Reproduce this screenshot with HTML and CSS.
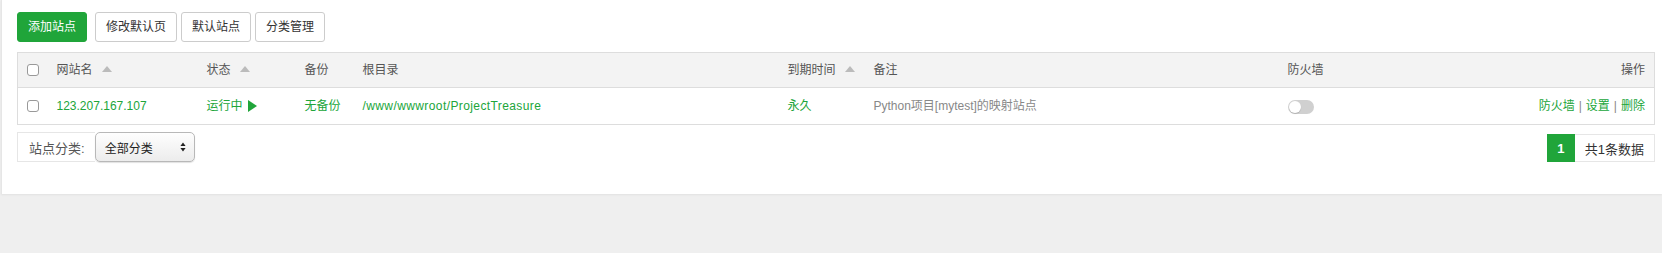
FILE: index.html
```html
<!DOCTYPE html>
<html lang="zh-CN">
<head>
<meta charset="utf-8">
<title>网站</title>
<link rel="stylesheet" href="styles.css">
</head>
<body>
<div class="panel">
  <div class="toolbar">
    <button class="btn btn-primary">添加站点</button>
    <button class="btn">修改默认页</button>
    <button class="btn">默认站点</button>
    <button class="btn">分类管理</button>
  </div>
  <table class="grid">
    <colgroup>
      <col class="c-check">
      <col class="c-name">
      <col class="c-status">
      <col class="c-backup">
      <col class="c-path">
      <col class="c-exp">
      <col class="c-note">
      <col class="c-fw">
      <col class="c-op">
    </colgroup>
    <thead>
      <tr>
        <th><span class="cb"></span></th>
        <th>网站名<span class="sort"></span></th>
        <th>状态<span class="sort"></span></th>
        <th>备份</th>
        <th>根目录</th>
        <th>到期时间<span class="sort"></span></th>
        <th>备注</th>
        <th>防火墙</th>
        <th class="right">操作</th>
      </tr>
    </thead>
    <tbody>
      <tr>
        <td><span class="cb"></span></td>
        <td class="green">123.207.167.107</td>
        <td class="green">运行中 <span class="play"></span></td>
        <td class="green">无备份</td>
        <td class="green path">/www/wwwroot/ProjectTreasure</td>
        <td class="green">永久</td>
        <td class="muted">Python项目[mytest]的映射站点</td>
        <td><span class="toggle"><span class="knob"></span></span></td>
        <td class="right ops"><span class="link">防火墙</span><span class="sep">|</span><span class="link">设置</span><span class="sep">|</span><span class="link">删除</span></td>
      </tr>
    </tbody>
  </table>
  <div class="footer">
    <div class="filter">
      <span class="filter-label">站点分类:</span>
      <div class="select">
        <span>全部分类</span>
        <svg class="updown" width="6" height="10" viewBox="0 0 6 10"><path d="M3 0.5 L5.6 4 L0.4 4 Z M3 9.5 L5.6 6 L0.4 6 Z" fill="#222"/></svg>
      </div>
    </div>
    <div class="pager">
      <span class="page current">1</span>
      <span class="page info">共1条数据</span>
    </div>
  </div>
</div>
</body>
</html>
```

FILE: styles.css
```css
* { box-sizing: border-box; }

html, body {
  margin: 0;
  padding: 0;
}

body {
  background: #efefef;
  font-family: "Liberation Sans", "Noto Sans CJK SC", sans-serif;
  font-size: 12px;
  color: #555;
  height: 253px;
}

.panel {
  background: #fff;
  height: 194px;
  margin-left: 1px;
  padding: 12px 8px 0 15px;
  box-shadow: 0 1px 2px rgba(0, 0, 0, 0.06);
  border-left: 1px solid #e6e6e6;
}

.toolbar {
  display: flex;
  gap: 4px;
  height: 30px;
}

.btn {
  font-family: inherit;
  font-size: 12px;
  height: 30px;
  padding: 0 10px;
  border: 1px solid #ccc;
  border-radius: 3px;
  background: #fff;
  color: #333;
  line-height: 28px;
  cursor: pointer;
}

.btn-primary {
  background: #20a53a;
  border-color: #20a53a;
  color: #fff;
  margin-right: 4px;
}

.grid {
  margin-top: 10px;
  width: 1638px;
  border-collapse: collapse;
  table-layout: fixed;
  border: 1px solid #ddd;
}

.c-check { width: 30px; }
.c-name { width: 150px; }
.c-status { width: 98px; }
.c-backup { width: 58px; }
.c-path { width: 425px; }
.c-exp { width: 86px; }
.c-note { width: 414px; }
.c-fw { width: 180px; }
.c-op { width: auto; }

.grid th,
.grid td {
  padding: 0 0 0 9px;
  text-align: left;
  white-space: nowrap;
  vertical-align: middle;
}

.grid th {
  height: 35px;
  background: #f3f3f3;
  font-weight: normal;
  color: #555;
  border-bottom: 1px solid #ddd;
  line-height: 16px;
}

.grid td {
  height: 37px;
  line-height: 16px;
}

.grid .path {
  letter-spacing: 0.4px;
}

.grid .right {
  text-align: right;
  padding-right: 9px;
}

.cb {
  display: inline-block;
  width: 12px;
  height: 12px;
  border: 1px solid #999;
  border-radius: 3px;
  background: #fff;
  vertical-align: middle;
  position: relative;
  top: -1px;
}

.sort {
  display: inline-block;
  width: 0;
  height: 0;
  border-left: 5.5px solid transparent;
  border-right: 5.5px solid transparent;
  border-bottom: 6px solid #bbb;
  margin-left: 9px;
  vertical-align: middle;
  position: relative;
  top: -2px;
}

.green { color: #20a53a; }
.muted { color: #888; }

.play {
  display: inline-block;
  width: 0;
  height: 0;
  border-top: 6px solid transparent;
  border-bottom: 6px solid transparent;
  border-left: 9px solid #20a53a;
  vertical-align: middle;
  margin-left: 2px;
  position: relative;
  top: -1px;
}

.toggle {
  display: inline-block;
  width: 26px;
  height: 14px;
  border-radius: 7px;
  background: #d0d0d0;
  position: relative;
  vertical-align: middle;
  top: 0;
}

.knob {
  position: absolute;
  left: 1px;
  top: 1px;
  width: 12px;
  height: 12px;
  border-radius: 50%;
  background: #fff;
  box-shadow: 0 1px 1px rgba(0, 0, 0, 0.15);
}

.ops .link { color: #20a53a; }
.ops .sep {
  color: #888;
  margin: 0 4px;
}

.footer {
  display: flex;
  justify-content: space-between;
  align-items: center;
  margin-top: 7px;
  width: 1638px;
}

.filter {
  display: flex;
  align-items: center;
  height: 30px;
}

.filter-label {
  display: flex;
  align-items: center;
  height: 30px;
  padding: 0 10px 0 11px;
  border: 1px solid #e6e6e6;
  border-right: none;
  font-size: 13px;
  color: #555;
}

.select {
  display: flex;
  align-items: center;
  justify-content: space-between;
  width: 100px;
  height: 30px;
  padding: 0 8px 0 9px;
  border: 1px solid #b8b8b8;
  border-radius: 5px;
  background: linear-gradient(#fefefe, #ececec);
  box-shadow: 0 1px 1px rgba(0, 0, 0, 0.12);
  font-size: 12px;
  color: #222;
}

.pager {
  display: flex;
  height: 28px;
  margin-top: 2px;
}

.page {
  display: flex;
  align-items: center;
  justify-content: center;
  height: 28px;
  font-size: 13px;
}

.page.current {
  width: 28px;
  background: #20a53a;
  color: #fff;
  font-weight: bold;
}

.page.info {
  border: 1px solid #e6e6e6;
  border-left: none;
  padding: 0 10px;
  color: #333;
}
```
